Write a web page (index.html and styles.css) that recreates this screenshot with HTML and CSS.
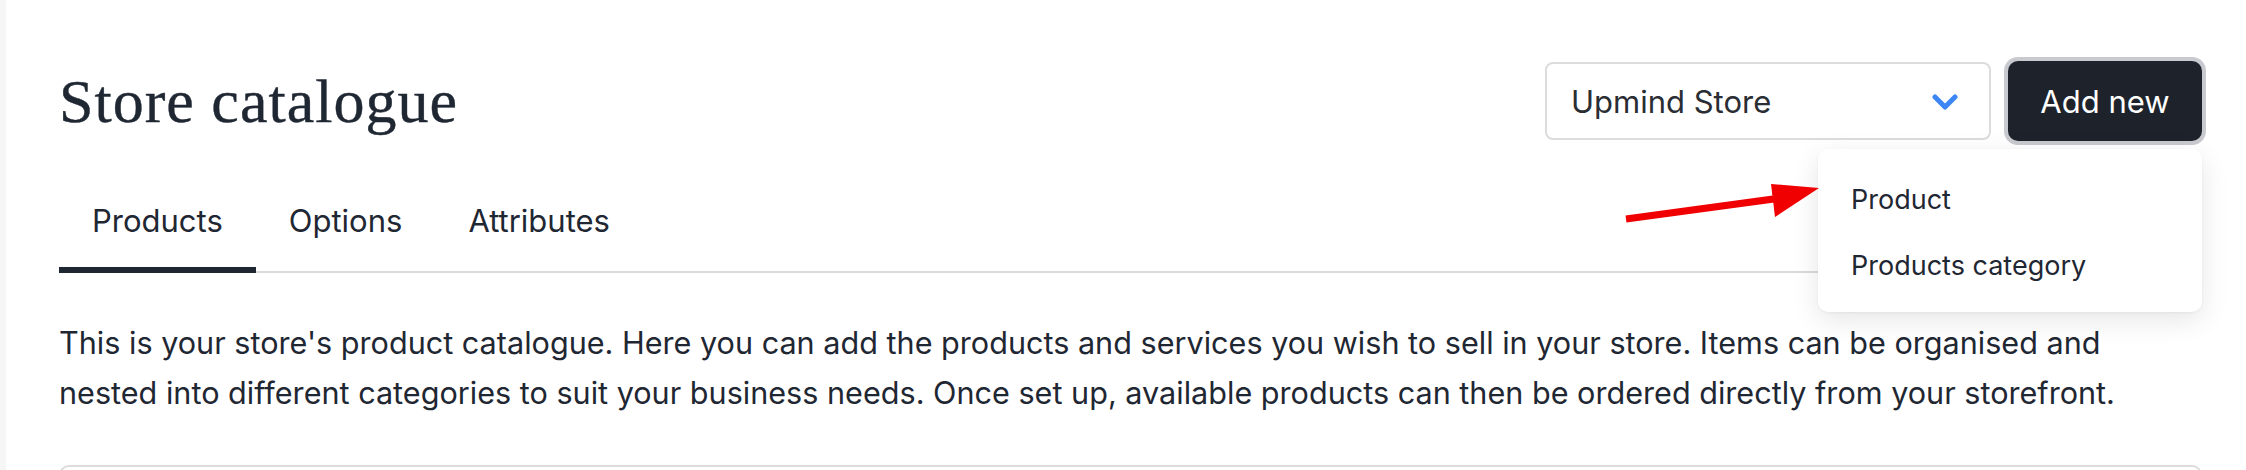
FILE: index.html
```html
<!DOCTYPE html>
<html lang="en">
<head>
<meta charset="utf-8">
<title>Store catalogue</title>
<link rel="stylesheet" href="styles.css">
</head>
<body>
<div class="app">
  <div class="edge"></div>
  <main class="main">
    <header class="header">
      <h1 class="title">Store catalogue</h1>
      <div class="actions">
        <div class="select">
          <span class="select-label">Upmind Store</span>
          <svg class="chevron" width="26" height="16" viewBox="0 0 26 16"><path d="M3 3 L13 13 L23 3" fill="none" stroke="#3d86f5" stroke-width="5" stroke-linecap="round" stroke-linejoin="round"/></svg>
        </div>
        <div class="btn-wrap">
          <button class="btn">Add new</button>
          <div class="menu">
            <div class="menu-item">Product</div>
            <div class="menu-item">Products category</div>
          </div>
        </div>
      </div>
    </header>
    <nav class="tabs">
      <div class="tab active">Products</div>
      <div class="tab">Options</div>
      <div class="tab">Attributes</div>
    </nav>
    <p class="intro">This is your store's product catalogue. Here you can add the products and services you wish to sell in your store. Items can be organised and nested into different categories to suit your business needs. Once set up, available products can then be ordered directly from your storefront.</p>
    <div class="panel"></div>
    <svg class="arrow" width="200" height="40" viewBox="0 0 200 40"><line x1="3" y1="35" x2="158" y2="14" stroke="#f00000" stroke-width="7"/><polygon points="148,0 196,4 152,33" fill="#f00000"/></svg>
  </main>
</div>
</body>
</html>
```
FILE: styles.css
```css
* { box-sizing: border-box; }
html, body { margin: 0; padding: 0; background: #fff; }
body {
  font-family: "Inter", "Noto Sans", sans-serif;
  color: #1f2733;
  width: 2246px;
  height: 470px;
  overflow: hidden;
}
.app { display: flex; height: 470px; }
.edge { width: 6px; background: #f6f6f7; flex: none; }
.main {
  flex: 1;
  position: relative;
  padding: 0 44px 0 53px;
}
.header {
  display: flex;
  justify-content: space-between;
  align-items: center;
  height: 174px;
  padding-top: 28px;
}
.title {
  margin: 0;
  font-family: "Liberation Serif", serif;
  font-weight: 400;
  font-size: 62px;
  letter-spacing: 1px;
  color: #1f2733;
  -webkit-text-stroke: 0.4px #1f2733;
}
.actions { display: flex; align-items: center; gap: 17px; }
.select {
  width: 446px;
  height: 78px;
  border: 2px solid #dcdcdc;
  border-radius: 8px;
  display: flex;
  align-items: center;
  justify-content: space-between;
  padding: 0 31px 0 24px;
  font-size: 31px;
  color: #2a2d33;
}
.chevron { margin-top: 2px; }
.btn-wrap { position: relative; }
.btn {
  display: block;
  width: 194px;
  height: 80px;
  background: #1e232b;
  color: #fff;
  border: none;
  border-radius: 10px;
  box-shadow: 0 0 0 4px #c9cacf;
  font-family: "Inter", "Noto Sans", sans-serif;
  font-size: 31px;
  padding: 0;
}
.menu {
  position: absolute;
  top: 88px;
  right: 0;
  width: 384px;
  background: #fff;
  border-radius: 10px;
  box-shadow: 0 8px 28px rgba(0,0,0,0.10), 0 1px 3px rgba(0,0,0,0.05);
  padding: 17px 0 14px;
  display: flex;
  flex-direction: column;
  z-index: 3;
}
.menu-item {
  height: 66px;
  display: flex;
  align-items: center;
  padding-left: 33px;
  font-size: 27px;
  color: #1f2733;
}
.tabs {
  display: flex;
  border-bottom: 2px solid #dadada;
  height: 99px;
  align-items: flex-end;
}
.tab {
  padding: 0 33px 28px;
  font-size: 31px;
  color: #1f2733;
  margin-bottom: -2px;
  border-bottom: 6px solid transparent;
}
.tab.active { border-bottom-color: #1f2733; }
.intro {
  margin: 45px 0 0;
  max-width: 2090px;
  font-size: 30.6px;
  line-height: 50px;
  color: #1f2733;
}
.panel {
  margin-top: 47px;
  height: 40px;
  border: 2px solid #dcdcdc;
  border-radius: 10px;
}
.arrow {
  position: absolute;
  left: 1617px;
  top: 184px;
  z-index: 4;
}
```
